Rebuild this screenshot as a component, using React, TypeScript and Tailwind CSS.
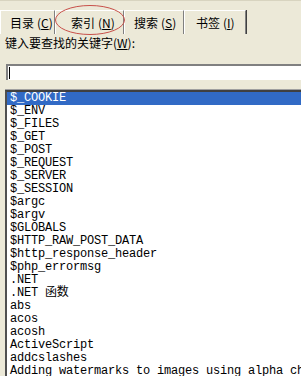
import React from "react";

const items = [
  "$_COOKIE",
  "$_ENV",
  "$_FILES",
  "$_GET",
  "$_POST",
  "$_REQUEST",
  "$_SERVER",
  "$_SESSION",
  "$argc",
  "$argv",
  "$GLOBALS",
  "$HTTP_RAW_POST_DATA",
  "$http_response_header",
  "$php_errormsg",
  ".NET",
  ".NET 函数",
  "abs",
  "acos",
  "acosh",
  "ActiveScript",
  "addcslashes",
  "Adding watermarks to images using alpha channels",
];

const cjk = { fontFamily: '"Noto Sans CJK SC", "Liberation Sans", sans-serif' };
const mono = { fontFamily: '"Liberation Mono", "Noto Sans CJK SC", monospace' };

function Tab({ label, key2, w, pl }: { label: string; key2: string; w: string; pl: string }) {
  return (
    <div
      className={`${w} ${pl} h-[24px] flex items-center border-t border-l border-t-white border-l-white border-r border-r-[#808080] shadow-[1px_0_0_#404040] text-[12px] text-black leading-none`}
      style={cjk}
    >
      {label}
      <span className="ml-[3px]">(<u>{key2}</u>)</span>
    </div>
  );
}

export default function App() {
  return (
    <div className="relative w-[301px] h-[376px] overflow-hidden bg-[#ECE9D8] border-t border-t-[#d8d4c0]">
      <div className="flex pt-[9px]">
        <Tab label="目录" key2="C" w="w-[55px]" pl="pl-[9px]" />
        <Tab label="索引" key2="N" w="w-[69px]" pl="pl-[15px]" />
        <Tab label="搜索" key2="S" w="w-[60px]" pl="pl-[9px]" />
        <Tab label="书签" key2="I" w="w-[62px]" pl="pl-[11px]" />
      </div>
      <svg className="absolute left-[54px] top-[3px]" width="72" height="32" viewBox="0 0 72 32">
        <ellipse cx="36" cy="16" rx="34.5" ry="14.5" fill="none" stroke="#C8504A" strokeWidth="1" />
      </svg>
      <div className="pl-[5px] pt-[2px] h-[19px] text-[12px] leading-[14px] text-black" style={cjk}>
        键入要查找的关键字(<u>W</u>):
      </div>
      <div className="ml-[6px] mt-[11px] h-[16px] bg-white border-t-2 border-l-2 border-t-[#808080] border-l-[#808080] flex items-center">
        <div className="ml-[1px] w-px h-[12px] bg-black" />
      </div>
      <div className="ml-[5px] mt-[10px] bg-white border-t-2 border-l-2 border-t-[#404040] border-l-[#505050] shadow-[0_-1px_0_#a0a0a0]">
        {items.map((it, i) => (
          <div
            key={i}
            className={`h-[13px] leading-[13px] pl-[3px] whitespace-nowrap text-[12px] tracking-[-0.2px] ${
              i === 0 ? "bg-[#316AC5] text-white" : "text-black"
            }`}
            style={mono}
          >
            {it}
          </div>
        ))}
      </div>
    </div>
  );
}
